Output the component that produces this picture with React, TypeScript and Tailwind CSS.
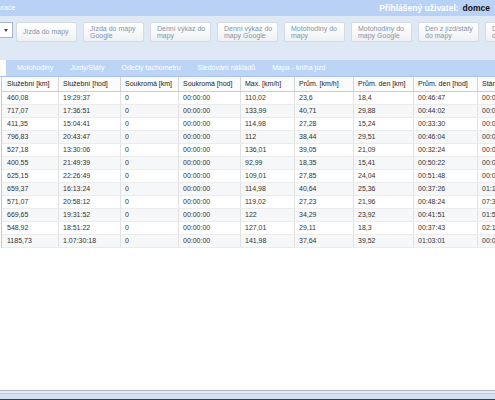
import React from "react";

const buttons = [
  ["Jízda do mapy"],
  ["Jízda do mapy", "Google"],
  ["Denní výkaz do", "mapy"],
  ["Denní výkaz do", "mapy Google"],
  ["Motohodiny do", "mapy"],
  ["Motohodiny do", "mapy Google"],
  ["Den z jízd/státy", "do mapy"],
  ["Den z jízd/státy", "do mapy Google"],
];

const tabs = ["Motohodiny", "Jízdy/Státy", "Odečty tachometru", "Sledování nákladů", "Mapa - kniha jízd"];

const columns = [
  {title: "Služební [km]", w: "w-[57px] pl-[5px]"},
  {title: "Služební [hod]", w: "w-[62px] pl-[4px]"},
  {title: "Soukromá [km]", w: "w-[58px] pl-[4px]"},
  {title: "Soukromá [hod]", w: "w-[62px] pl-[4px]"},
  {title: "Max. [km/h]", w: "w-[54px] pl-[4px]"},
  {title: "Prům. [km/h]", w: "w-[59px] pl-[4px]"},
  {title: "Prům. den [km]", w: "w-[60px] pl-[4px]"},
  {title: "Prům. den [hod]", w: "w-[64px] pl-[4px]"},
  {title: "Stání [hod]", w: "w-[80px] pl-[4px]"},
];

const rows = [
  ["460,08", "19:29:37", "0", "00:00:00", "110,02", "23,6", "18,4", "00:46:47", "00:00:00"],
  ["717,07", "17:36:51", "0", "00:00:00", "133,99", "40,71", "29,88", "00:44:02", "00:00:00"],
  ["411,35", "15:04:41", "0", "00:00:00", "114,98", "27,28", "15,24", "00:33:30", "00:00:00"],
  ["796,83", "20:43:47", "0", "00:00:00", "112", "38,44", "29,51", "00:46:04", "00:00:00"],
  ["527,18", "13:30:06", "0", "00:00:00", "136,01", "39,05", "21,09", "00:32:24", "00:00:00"],
  ["400,55", "21:49:39", "0", "00:00:00", "92,99", "18,35", "15,41", "00:50:22", "00:00:00"],
  ["625,15", "22:26:49", "0", "00:00:00", "109,01", "27,85", "24,04", "00:51:48", "00:00:00"],
  ["659,37", "16:13:24", "0", "00:00:00", "114,98", "40,64", "25,36", "00:37:26", "01:14:22"],
  ["571,07", "20:58:12", "0", "00:00:00", "119,02", "27,23", "21,96", "00:48:24", "07:32:10"],
  ["669,65", "19:31:52", "0", "00:00:00", "122", "34,29", "23,92", "00:41:51", "01:52:40"],
  ["548,92", "18:51:22", "0", "00:00:00", "127,01", "29,11", "18,3", "00:37:43", "02:17:05"],
  ["1185,73", "1.07:30:18", "0", "00:00:00", "141,98", "37,64", "39,52", "01:03:01", "00:00:00"],
];

export default function App() {
  return (
    <div className="w-[495px] h-[400px] overflow-hidden flex flex-col bg-white font-['Liberation_Sans',Arial,sans-serif] text-[7px] text-[#333]">
      {/* horní lišta */}
      <div className="h-[16px] shrink-0 bg-[#b8d1f5] flex items-center justify-between overflow-hidden">
        <span className="-ml-[22px] text-white text-[7px] whitespace-nowrap">Konfigurace</span>
        <div className="flex items-center gap-[4px] pr-[5px] text-[8.5px] font-bold whitespace-nowrap">
          <span className="text-white">Přihlášený uživatel:</span>
          <span className="text-[#111]">domce</span>
        </div>
      </div>

      {/* tlačítka */}
      <div className="h-[44px] shrink-0 bg-[#dfe8f5] flex items-start pt-[6px] gap-[3px] overflow-hidden">
        <div className="w-[13px] h-[16px] shrink-0 bg-white border border-l-0 border-[#a7b6ca] flex items-center justify-center">
          <span className="w-0 h-0 border-l-[2px] border-r-[2px] border-t-[3px] border-l-transparent border-r-transparent border-t-[#445]"></span>
        </div>
        <div className="flex gap-[6px]">
          {buttons.map((b, i) =>
            <div key={i} className="w-[61px] h-[20px] shrink-0 rounded-[2px] border border-[#d4dbe5] bg-gradient-to-b from-white to-[#eef1f4] px-[6px] flex flex-col justify-center text-[#8494a9] leading-[7.5px] whitespace-nowrap overflow-hidden">
              {b.map(line => <span key={line}>{line}</span>)}
            </div>
          )}
        </div>
      </div>

      {/* záložky */}
      <div className="h-[17px] shrink-0 bg-[#bcd5f6] flex items-stretch overflow-hidden border-b border-[#aac4e8]">
        <div className="w-[6px] shrink-0 bg-white flex items-center overflow-hidden">
          <span className="-ml-[26px] text-[#333] whitespace-nowrap">Celkové</span>
        </div>
        <div className="flex items-center gap-[17px] pl-[11px] text-white whitespace-nowrap">
          {tabs.map(t => <span key={t}>{t}</span>)}
        </div>
      </div>

      {/* tabulka */}
      <div className="shrink-0 pl-[1px] overflow-hidden">
        <div className="w-[560px] border-l border-[#c9c9c9]">
          <div className="h-[15px] flex bg-[#fbfbfb] border-b border-[#cfcfcf]">
            {columns.map(c =>
              <div key={c.title} className={`${c.w} shrink-0 border-r border-[#d4d4d4] flex items-center whitespace-nowrap text-[#222]`}>{c.title}</div>
            )}
          </div>
          {rows.map((r, ri) =>
            <div key={ri} className={`h-[13px] flex border-b border-[#ececec] ${ri % 2 === 1 ? "bg-[#f6f7f9]" : "bg-white"}`}>
              {r.map((v, ci) =>
                <div key={ci} className={`${columns[ci].w} shrink-0 border-r border-[#e2e2e2] flex items-center whitespace-nowrap overflow-hidden`}>{v}</div>
              )}
            </div>
          )}
        </div>
      </div>

      <div className="flex-1 bg-white"></div>

      {/* spodní lišta */}
      <div className="h-[10px] shrink-0 flex flex-col">
        <div className="h-[1px] bg-[#a8b2be]"></div>
        <div className="h-[2px] bg-[#e4ecf7]"></div>
        <div className="h-[1px] bg-[#b9cbe3]"></div>
        <div className="h-[5px] bg-[#d3e0f2]"></div>
        <div className="h-[1px] bg-[#2f3e55]"></div>
      </div>
    </div>
  );
}
